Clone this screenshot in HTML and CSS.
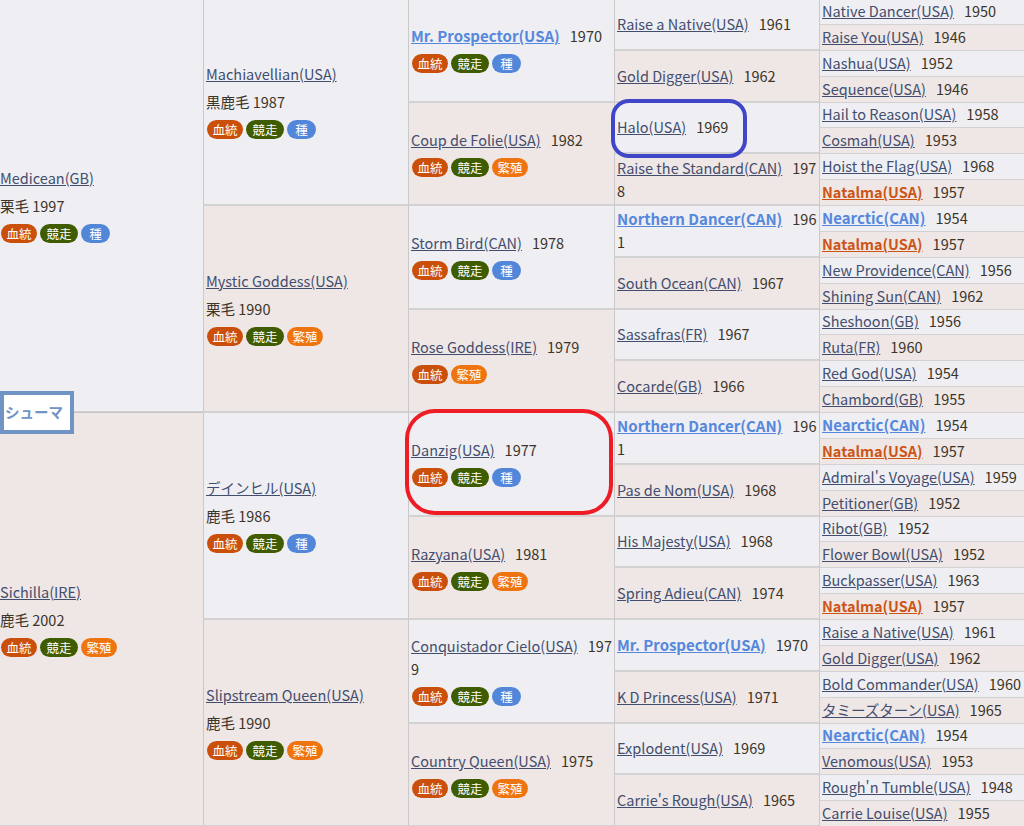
FILE: index.html
```html
<!DOCTYPE html>
<html lang="ja">
<head>
<meta charset="utf-8">
<title>シューマ 血統表</title>
<link rel="stylesheet" href="styles.css">
</head>
<body>
<main class="ped">
<div class="c g1"><p class="n"><a href="#">Medicean(GB)</a></p><p class="d">栗毛 1997</p><p class="t"><b class="r">血統</b><b class="k">競走</b><b class="s">種</b></p></div>
<div class="c g2"><p class="n"><a href="#">Machiavellian(USA)</a></p><p class="d">黒鹿毛 1987</p><p class="t"><b class="r">血統</b><b class="k">競走</b><b class="s">種</b></p></div>
<div class="c g3"><p class="n"><a href="#" class="h">Mr. Prospector(USA)</a><span>1970</span></p><p class="t"><b class="r">血統</b><b class="k">競走</b><b class="s">種</b></p></div>
<div class="c g4"><p class="n"><a href="#">Raise a Native(USA)</a><span>1961</span></p></div>
<div class="c g5"><p class="n"><a href="#">Native Dancer(USA)</a><span>1950</span></p></div>
<div class="c g5 m"><p class="n"><a href="#">Raise You(USA)</a><span>1946</span></p></div>
<div class="c g4 m"><p class="n"><a href="#">Gold Digger(USA)</a><span>1962</span></p></div>
<div class="c g5"><p class="n"><a href="#">Nashua(USA)</a><span>1952</span></p></div>
<div class="c g5 m"><p class="n"><a href="#">Sequence(USA)</a><span>1946</span></p></div>
<div class="c g3 m"><p class="n"><a href="#">Coup de Folie(USA)</a><span>1982</span></p><p class="t"><b class="r">血統</b><b class="k">競走</b><b class="f">繁殖</b></p></div>
<div class="c g4"><p class="n"><a href="#">Halo(USA)</a><span>1969</span></p></div>
<div class="c g5"><p class="n"><a href="#">Hail to Reason(USA)</a><span>1958</span></p></div>
<div class="c g5 m"><p class="n"><a href="#">Cosmah(USA)</a><span>1953</span></p></div>
<div class="c g4 m"><p class="n"><a href="#">Raise the Standard(CAN)</a><span>1978</span></p></div>
<div class="c g5"><p class="n"><a href="#">Hoist the Flag(USA)</a><span>1968</span></p></div>
<div class="c g5 m"><p class="n"><a href="#" class="o">Natalma(USA)</a><span>1957</span></p></div>
<div class="c g2 m"><p class="n"><a href="#">Mystic Goddess(USA)</a></p><p class="d">栗毛 1990</p><p class="t"><b class="r">血統</b><b class="k">競走</b><b class="f">繁殖</b></p></div>
<div class="c g3"><p class="n"><a href="#">Storm Bird(CAN)</a><span>1978</span></p><p class="t"><b class="r">血統</b><b class="k">競走</b><b class="s">種</b></p></div>
<div class="c g4"><p class="n"><a href="#" class="h">Northern Dancer(CAN)</a><span>1961</span></p></div>
<div class="c g5"><p class="n"><a href="#" class="h">Nearctic(CAN)</a><span>1954</span></p></div>
<div class="c g5 m"><p class="n"><a href="#" class="o">Natalma(USA)</a><span>1957</span></p></div>
<div class="c g4 m"><p class="n"><a href="#">South Ocean(CAN)</a><span>1967</span></p></div>
<div class="c g5"><p class="n"><a href="#">New Providence(CAN)</a><span>1956</span></p></div>
<div class="c g5 m"><p class="n"><a href="#">Shining Sun(CAN)</a><span>1962</span></p></div>
<div class="c g3 m"><p class="n"><a href="#">Rose Goddess(IRE)</a><span>1979</span></p><p class="t"><b class="r">血統</b><b class="f">繁殖</b></p></div>
<div class="c g4"><p class="n"><a href="#">Sassafras(FR)</a><span>1967</span></p></div>
<div class="c g5"><p class="n"><a href="#">Sheshoon(GB)</a><span>1956</span></p></div>
<div class="c g5 m"><p class="n"><a href="#">Ruta(FR)</a><span>1960</span></p></div>
<div class="c g4 m"><p class="n"><a href="#">Cocarde(GB)</a><span>1966</span></p></div>
<div class="c g5"><p class="n"><a href="#">Red God(USA)</a><span>1954</span></p></div>
<div class="c g5 m"><p class="n"><a href="#">Chambord(GB)</a><span>1955</span></p></div>
<div class="c g1 m"><p class="n"><a href="#">Sichilla(IRE)</a></p><p class="d">鹿毛 2002</p><p class="t"><b class="r">血統</b><b class="k">競走</b><b class="f">繁殖</b></p></div>
<div class="c g2"><p class="n"><a href="#">デインヒル(USA)</a></p><p class="d">鹿毛 1986</p><p class="t"><b class="r">血統</b><b class="k">競走</b><b class="s">種</b></p></div>
<div class="c g3"><p class="n"><a href="#">Danzig(USA)</a><span>1977</span></p><p class="t"><b class="r">血統</b><b class="k">競走</b><b class="s">種</b></p></div>
<div class="c g4"><p class="n"><a href="#" class="h">Northern Dancer(CAN)</a><span>1961</span></p></div>
<div class="c g5"><p class="n"><a href="#" class="h">Nearctic(CAN)</a><span>1954</span></p></div>
<div class="c g5 m"><p class="n"><a href="#" class="o">Natalma(USA)</a><span>1957</span></p></div>
<div class="c g4 m"><p class="n"><a href="#">Pas de Nom(USA)</a><span>1968</span></p></div>
<div class="c g5"><p class="n"><a href="#">Admiral's Voyage(USA)</a><span>1959</span></p></div>
<div class="c g5 m"><p class="n"><a href="#">Petitioner(GB)</a><span>1952</span></p></div>
<div class="c g3 m"><p class="n"><a href="#">Razyana(USA)</a><span>1981</span></p><p class="t"><b class="r">血統</b><b class="k">競走</b><b class="f">繁殖</b></p></div>
<div class="c g4"><p class="n"><a href="#">His Majesty(USA)</a><span>1968</span></p></div>
<div class="c g5"><p class="n"><a href="#">Ribot(GB)</a><span>1952</span></p></div>
<div class="c g5 m"><p class="n"><a href="#">Flower Bowl(USA)</a><span>1952</span></p></div>
<div class="c g4 m"><p class="n"><a href="#">Spring Adieu(CAN)</a><span>1974</span></p></div>
<div class="c g5"><p class="n"><a href="#">Buckpasser(USA)</a><span>1963</span></p></div>
<div class="c g5 m"><p class="n"><a href="#" class="o">Natalma(USA)</a><span>1957</span></p></div>
<div class="c g2 m"><p class="n"><a href="#">Slipstream Queen(USA)</a></p><p class="d">鹿毛 1990</p><p class="t"><b class="r">血統</b><b class="k">競走</b><b class="f">繁殖</b></p></div>
<div class="c g3"><p class="n"><a href="#">Conquistador Cielo(USA)</a><span>1979</span></p><p class="t"><b class="r">血統</b><b class="k">競走</b><b class="s">種</b></p></div>
<div class="c g4"><p class="n"><a href="#" class="h">Mr. Prospector(USA)</a><span>1970</span></p></div>
<div class="c g5"><p class="n"><a href="#">Raise a Native(USA)</a><span>1961</span></p></div>
<div class="c g5 m"><p class="n"><a href="#">Gold Digger(USA)</a><span>1962</span></p></div>
<div class="c g4 m"><p class="n"><a href="#">K D Princess(USA)</a><span>1971</span></p></div>
<div class="c g5"><p class="n"><a href="#">Bold Commander(USA)</a><span>1960</span></p></div>
<div class="c g5 m"><p class="n"><a href="#">タミーズターン(USA)</a><span>1965</span></p></div>
<div class="c g3 m"><p class="n"><a href="#">Country Queen(USA)</a><span>1975</span></p><p class="t"><b class="r">血統</b><b class="k">競走</b><b class="f">繁殖</b></p></div>
<div class="c g4"><p class="n"><a href="#">Explodent(USA)</a><span>1969</span></p></div>
<div class="c g5"><p class="n"><a href="#" class="h">Nearctic(CAN)</a><span>1954</span></p></div>
<div class="c g5 m"><p class="n"><a href="#">Venomous(USA)</a><span>1953</span></p></div>
<div class="c g4 m"><p class="n"><a href="#">Carrie's Rough(USA)</a><span>1965</span></p></div>
<div class="c g5"><p class="n"><a href="#">Rough'n Tumble(USA)</a><span>1948</span></p></div>
<div class="c g5 m"><p class="n"><a href="#">Carrie Louise(USA)</a><span>1955</span></p></div>
<div class="label">シューマ</div>
<div class="mark mark-blue"></div>
<div class="mark mark-red"></div>
</main>
</body>
</html>
```

FILE: styles.css
```css
* { box-sizing: border-box; }
html, body { margin: 0; padding: 0; height: 826px; overflow: hidden; background: #eeeef3; }
body { font-family: "Noto Sans CJK JP", "Noto Sans", sans-serif; font-size: 14.5px; color: #3c3528; }
p { margin: 0; }
.ped {
  position: relative;
  display: grid;
  grid-template-columns: 203px 205px 206px 205px 205px;
  grid-template-rows: repeat(32, minmax(0, 1fr));
  height: 828px;
  margin-top: -2px;
}
.c {
  display: flex;
  flex-direction: column;
  justify-content: center;
  gap: 5px;
  min-width: 0;
  min-height: 0;
  padding: 0 2px 1px;
  background: #eeeef3;
  border-left: 1px solid #c9c9c9;
  border-top: 1px solid #d2d2d2;
  border-bottom: 1px solid #d2d2d2;
  word-break: break-all;
  line-height: 23px;
}
.m { background: #efe6e6; }
.g1 { grid-column: 1; grid-row-end: span 16; border-left: 0; border-top-color: #c4c4c4; padding: 0 0 2px; }
.g2 { grid-column: 2; grid-row-end: span 8; padding-bottom: 2px; }
.g3 { grid-column: 3; grid-row-end: span 4; padding-bottom: 2px; }
.g4 { grid-column: 4; grid-row-end: span 2; }
.g5 { grid-column: 5; grid-row-end: span 1; border-bottom: 0; padding-bottom: 2px; }
a { color: #434e6e; text-decoration: underline; padding-right: 3px; }
a.h { color: #5588dd; font-weight: 700; font-size: 15px; }
a.o { color: #cc5516; font-weight: 700; }
.n span { margin-left: 7px; }
.t { display: flex; gap: 3px; line-height: 19px; word-break: normal; margin-top: 2px; padding-left: 1px; }
.t b {
  display: block;
  height: 19px;
  border-radius: 10px;
  color: #fff;
  font-size: 12.5px;
  font-weight: 400;
  text-align: center;
  box-shadow: 0 0 1px rgba(255,255,255,.8);
}
.t .r { width: 36px; background: #c94f0a; }
.t .k { width: 38px; background: #3f5c00; }
.t .s { width: 29px; background: #5286d8; }
.t .f { width: 36px; background: #ee7410; }
.label {
  position: absolute;
  left: 0;
  top: 393px;
  width: 74px;
  height: 43px;
  border: 4px solid #7094c4;
  background: #fff;
  color: #7094c4;
  font-size: 14.5px;
  font-weight: 700;
  line-height: 33px;
  padding-left: 1px;
  white-space: nowrap;
}
.mark { position: absolute; pointer-events: none; }
.mark-blue { left: 611px; top: 101px; width: 136px; height: 59px; border: 4px solid #3f47c8; border-radius: 18px; }
.mark-red { left: 405px; top: 411px; width: 208px; height: 106px; border: 4px solid #ee1c25; border-radius: 30px; }
```
